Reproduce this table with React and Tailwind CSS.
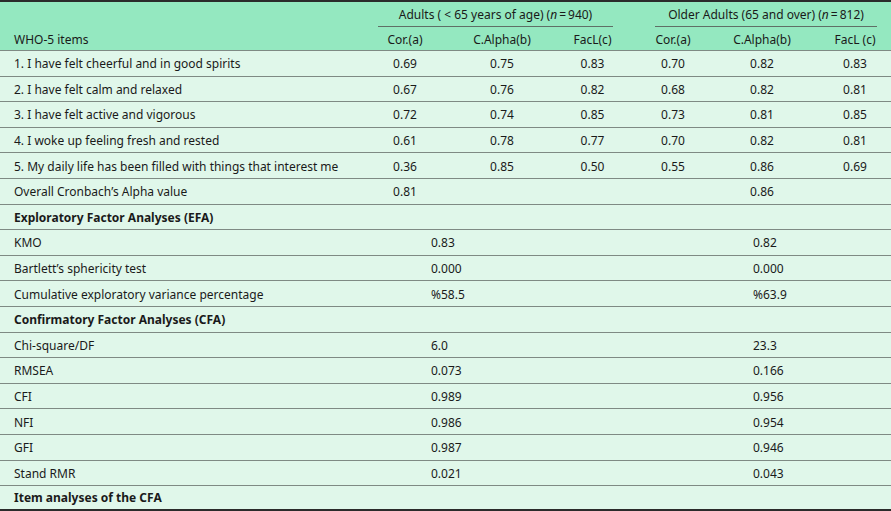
const cols = "grid grid-cols-[378px_54px_140px_41px_42px_36px_142px_44px_14px]";

const items = [
  ["1. I have felt cheerful and in good spirits", "0.69", "0.75", "0.83", "0.70", "0.82", "0.83"],
  ["2. I have felt calm and relaxed", "0.67", "0.76", "0.82", "0.68", "0.82", "0.81"],
  ["3. I have felt active and vigorous", "0.72", "0.74", "0.85", "0.73", "0.81", "0.85"],
  ["4. I woke up feeling fresh and rested", "0.61", "0.78", "0.77", "0.70", "0.82", "0.81"],
  ["5. My daily life has been filled with things that interest me", "0.36", "0.85", "0.50", "0.55", "0.86", "0.69"],
];

const efa = [
  ["KMO", "0.83", "0.82"],
  ["Bartlett\u2019s sphericity test", "0.000", "0.000"],
  ["Cumulative exploratory variance percentage", "%58.5", "%63.9"],
];

const cfa = [
  ["Chi-square/DF", "6.0", "23.3"],
  ["RMSEA", "0.073", "0.166"],
  ["CFI", "0.989", "0.956"],
  ["NFI", "0.986", "0.954"],
  ["GFI", "0.987", "0.946"],
  ["Stand RMR", "0.021", "0.043"],
];

const rowCls = "h-[25.6px] pt-[2px] items-center border-b border-[#7f8a84]";

function ItemRow({ r }) {
  return (
    <div className={`${cols} ${rowCls}`}>
      <div className="pl-[14px]">{r[0]}</div>
      <div className="text-center">{r[1]}</div>
      <div className="text-center">{r[2]}</div>
      <div className="text-center">{r[3]}</div>
      <div />
      <div className="text-center">{r[4]}</div>
      <div className="text-center">{r[5]}</div>
      <div className="text-center">{r[6]}</div>
      <div />
    </div>
  );
}

function PairRow({ r }) {
  return (
    <div className={`flex ${rowCls}`}>
      <div className="w-[431px] pl-[14px]">{r[0]}</div>
      <div className="w-[322px]">{r[1]}</div>
      <div>{r[2]}</div>
    </div>
  );
}

function Section({ title, last }) {
  return (
    <div
      className={`flex items-center pl-[14px] font-bold ${
        last ? "h-[24.8px] pt-[2px] border-b-2 border-[#2b2b2b]" : rowCls
      }`}
    >
      {title}
    </div>
  );
}

export default function App() {
  return (
    <div
      className="w-[891px] h-[511px] overflow-hidden bg-[#e0f7ea] text-[12px] text-[#1a1a1a]"
      style={{ fontFamily: "'Noto Sans', sans-serif" }}
    >
      <div className="bg-[#94e8c0] border-t-2 border-[#2b2b2b] border-b border-b-[#7f8a84]">
        <div className={`${cols} h-[25px]`}>
          <div />
          <div className="col-span-3 flex items-center justify-center pt-[2px] border-b border-[#5f6f66]">
            <span>
              Adults ( &lt; 65 years of age) (<i>n</i>{"\u2009=\u2009"}940)
            </span>
          </div>
          <div />
          <div className="col-span-3 flex items-center justify-center pt-[2px] border-b border-[#5f6f66]">
            <span>
              Older Adults (65 and over) (<i>n</i>{"\u2009=\u2009"}812)
            </span>
          </div>
          <div />
        </div>
        <div className={`${cols} h-[23px] pt-[2px] items-center`}>
          <div className="pl-[14px]">WHO-5 items</div>
          <div className="text-center">Cor.(a)</div>
          <div className="text-center">C.Alpha(b)</div>
          <div className="text-center">FacL(c)</div>
          <div />
          <div className="text-center">Cor.(a)</div>
          <div className="text-center">C.Alpha(b)</div>
          <div className="text-center">FacL (c)</div>
          <div />
        </div>
      </div>

      {items.map((r) => (
        <ItemRow key={r[0]} r={r} />
      ))}

      <div className={`${cols} ${rowCls}`}>
        <div className="pl-[14px]">Overall Cronbach&rsquo;s Alpha value</div>
        <div className="text-center">0.81</div>
        <div />
        <div />
        <div />
        <div />
        <div className="text-center">0.86</div>
        <div />
        <div />
      </div>

      <Section title="Exploratory Factor Analyses (EFA)" />
      {efa.map((r) => (
        <PairRow key={r[0]} r={r} />
      ))}

      <Section title="Confirmatory Factor Analyses (CFA)" />
      {cfa.map((r) => (
        <PairRow key={r[0]} r={r} />
      ))}

      <Section title="Item analyses of the CFA" last />
    </div>
  );
}
